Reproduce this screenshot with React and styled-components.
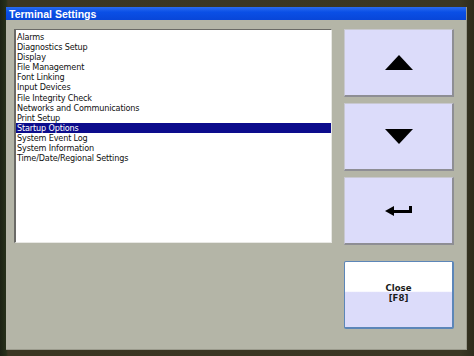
import React from 'react';
import styled, { createGlobalStyle } from 'styled-components';

const GlobalStyle = createGlobalStyle`
  html, body {
    margin: 0;
    padding: 0;
    width: 474px;
    height: 356px;
    overflow: hidden;
    background: linear-gradient(180deg, #3b3622 0%, #3a3a22 70%, #5a5a34 100%);
  }
`;

const Screen = styled.div`
  width: 474px;
  height: 356px;
  padding: 7px 7px 6px 6px;
  box-sizing: border-box;
  background: linear-gradient(90deg, #1c2214 0px, #26301a 6px, #3b3622 8px, #3b3724 460px, #2e2c1c 474px);
`;

const Window = styled.div`
  width: 461px;
  height: 343px;
  display: flex;
  flex-direction: column;
  background: #b4b5a7;
  border-right: 1px solid #9a9a8c;
  border-bottom: 1px solid #9a9a8c;
  box-sizing: border-box;
`;

const TitleBar = styled.div`
  height: 13px;
  display: flex;
  align-items: center;
  padding-left: 3px;
  background: linear-gradient(180deg, #2a6cf0 0%, #0a4fe6 40%, #0846d8 100%);
  color: #ffffff;
  font-family: "Liberation Sans", Arial, sans-serif;
  font-weight: bold;
  font-size: 10.5px;
`;

const Body = styled.div`
  flex: 1;
  display: flex;
  padding: 9px 11px 0 8px;
  gap: 12px;
`;

const ListBox = styled.div`
  width: 318px;
  height: 214px;
  box-sizing: border-box;
  background: #ffffff;
  border-top: 1px solid #6a6a66;
  border-left: 2px solid #6a6a66;
  border-right: 1px solid #e8e8e4;
  border-bottom: 1px solid #e8e8e4;
  padding-top: 2px;
`;

const Item = styled.div`
  height: 10.1px;
  line-height: 10px;
  padding-left: 1px;
  font-family: "DejaVu Sans Condensed", "DejaVu Sans", sans-serif;
  font-size: 9px;
  letter-spacing: -0.15px;
  color: ${p => (p.$selected ? '#ffffff' : '#101010')};
  background: ${p => (p.$selected ? '#0c0c8c' : 'transparent')};
  white-space: nowrap;
`;

const Buttons = styled.div`
  display: flex;
  flex-direction: column;
  width: 110px;
`;

const KeyButton = styled.div`
  height: 68px;
  margin-bottom: ${p => p.$gap}px;
  box-sizing: border-box;
  display: flex;
  align-items: center;
  justify-content: center;
  background: #dcdcfa;
  border-top: 1px solid #c8c8d0;
  border-left: 1px solid #c8c8d0;
  border-right: 2px solid #8e8e94;
  border-bottom: 2px solid #8e8e94;
`;

const CloseButton = styled.div`
  height: 68px;
  box-sizing: border-box;
  display: flex;
  flex-direction: column;
  align-items: center;
  justify-content: center;
  border: 1px solid #5c86b8;
  border-right-width: 2px;
  border-bottom-width: 2px;
  border-radius: 2px;
  background: linear-gradient(180deg, #ffffff 0%, #ffffff 45%, #dcdcfa 47%, #dcdcfa 100%);
  font-family: "DejaVu Sans Condensed", "DejaVu Sans", sans-serif;
  font-weight: bold;
  font-size: 9.5px;
  line-height: 10px;
  color: #1a1a1a;
  padding-bottom: 3px;
`;

const items = [
  'Alarms',
  'Diagnostics Setup',
  'Display',
  'File Management',
  'Font Linking',
  'Input Devices',
  'File Integrity Check',
  'Networks and Communications',
  'Print Setup',
  'Startup Options',
  'System Event Log',
  'System Information',
  'Time/Date/Regional Settings',
];

const UpArrow = () => (
  <svg width="28" height="15" viewBox="0 0 28 15">
    <polygon points="14,0 28,15 0,15" fill="#000" />
  </svg>
);

const DownArrow = () => (
  <svg width="28" height="15" viewBox="0 0 28 15">
    <polygon points="0,0 28,0 14,15" fill="#000" />
  </svg>
);

const EnterArrow = () => (
  <svg width="27" height="11" viewBox="0 0 27 11" style={{ marginTop: 2 }}>
    <polygon points="0,5 9,0 9,10" fill="#000" />
    <rect x="8" y="4" width="19" height="3" fill="#000" />
    <rect x="24" y="0" width="3" height="7" fill="#000" />
  </svg>
);

export default function App() {
  return (
    <Screen>
      <GlobalStyle />
      <Window>
        <TitleBar>Terminal Settings</TitleBar>
        <Body>
          <ListBox>
            {items.map(it => (
              <Item key={it} $selected={it === 'Startup Options'}>{it}</Item>
            ))}
          </ListBox>
          <Buttons>
            <KeyButton $gap={6}><UpArrow /></KeyButton>
            <KeyButton $gap={6}><DownArrow /></KeyButton>
            <KeyButton $gap={16}><EnterArrow /></KeyButton>
            <CloseButton>
              <span>Close</span>
              <span>[F8]</span>
            </CloseButton>
          </Buttons>
        </Body>
      </Window>
    </Screen>
  );
}
